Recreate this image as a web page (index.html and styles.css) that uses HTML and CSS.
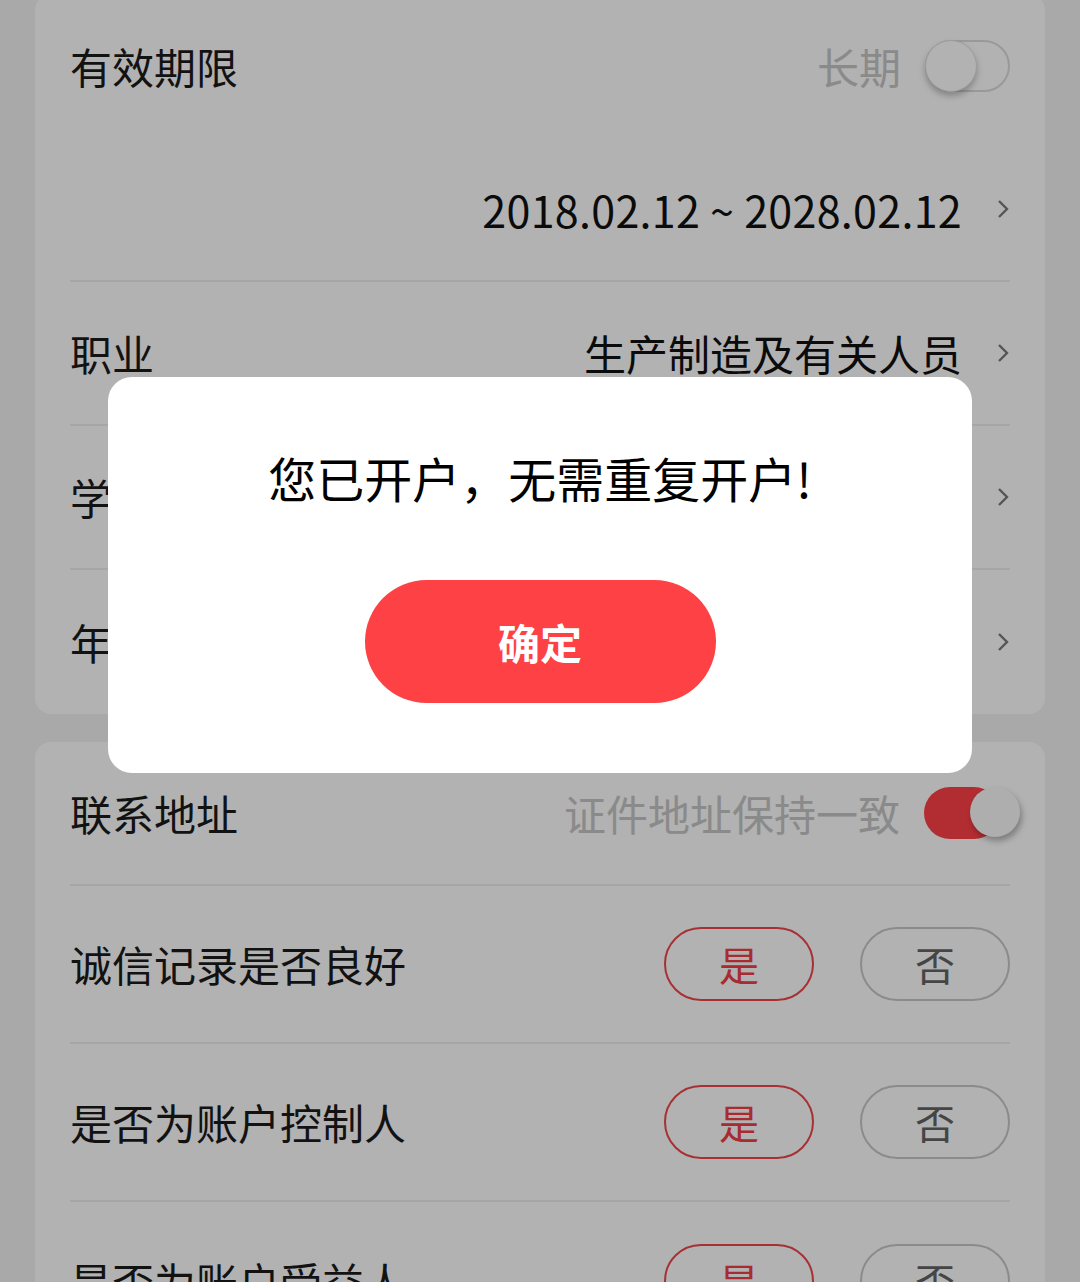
FILE: index.html
```html
<!DOCTYPE html>
<html lang="zh-CN">
<head>
    <meta charset="UTF-8">
    <meta name="viewport" content="width=device-width, initial-scale=1.0">
    <title>开户信息</title>
    <link rel="stylesheet" href="styles.css">
</head>
<body>

<div class="page">
    <!-- Card: id info -->
    <div class="card">
        <div class="row">
            <span class="label">有效期限</span>
            <div class="right">
                <span class="hint">长期</span>
                <span class="switch"><span class="knob"></span></span>
            </div>
        </div>
        <div class="row line">
            <span class="label"></span>
            <div class="right">
                <span class="value date">2018.02.12 ~ 2028.02.12</span>
                <svg class="arrow" viewBox="0 0 14 24"><path d="M3 4 L11 12 L3 20" /></svg>
            </div>
        </div>
        <div class="row line">
            <span class="label">职业</span>
            <div class="right">
                <span class="value">生产制造及有关人员</span>
                <svg class="arrow" viewBox="0 0 14 24"><path d="M3 4 L11 12 L3 20" /></svg>
            </div>
        </div>
        <div class="row line">
            <span class="label">学历</span>
            <div class="right">
                <span class="value">本科</span>
                <svg class="arrow" viewBox="0 0 14 24"><path d="M3 4 L11 12 L3 20" /></svg>
            </div>
        </div>
        <div class="row">
            <span class="label">年收入</span>
            <div class="right">
                <span class="value">10-50万</span>
                <svg class="arrow" viewBox="0 0 14 24"><path d="M3 4 L11 12 L3 20" /></svg>
            </div>
        </div>
    </div>

    <!-- Card: address and questions -->
    <div class="card">
        <div class="row line">
            <span class="label">联系地址</span>
            <div class="right">
                <span class="hint">证件地址保持一致</span>
                <span class="switch on"><span class="knob"></span></span>
            </div>
        </div>
        <div class="row tall line">
            <span class="label">诚信记录是否良好</span>
            <div class="choices">
                <span class="choice yes">是</span>
                <span class="choice">否</span>
            </div>
        </div>
        <div class="row tall line">
            <span class="label">是否为账户控制人</span>
            <div class="choices">
                <span class="choice yes">是</span>
                <span class="choice">否</span>
            </div>
        </div>
        <div class="row tall">
            <span class="label">是否为账户受益人</span>
            <div class="choices">
                <span class="choice yes">是</span>
                <span class="choice">否</span>
            </div>
        </div>
    </div>
</div>

<!-- Alert dialog -->
<div class="mask">
    <div class="dialog">
        <p class="dialog-title">您已开户，无需重复开户!</p>
        <button class="dialog-btn">确定</button>
    </div>
</div>

</body>
</html>
```

FILE: styles.css
```css
body {
    margin: 0;
    background-color: #f2f2f2;
    font-family: "Noto Sans CJK SC", "Noto Sans", sans-serif;
    color: #1a1a1a;
    overflow: hidden;
}
.page {
    padding: 0 35px;
    margin-top: -6px;
}
.card {
    background-color: #fff;
    border-radius: 16px;
    padding: 0 35px;
    margin-bottom: 28px;
}
.row {
    height: 144px;
    display: flex;
    align-items: center;
    justify-content: space-between;
    box-sizing: border-box;
}
.row.tall {
    height: 158px;
}
.row.line {
    border-bottom: 2px solid #eee;
}
.label {
    font-size: 42px;
    line-height: 1;
}
.right {
    display: flex;
    align-items: center;
}
.value {
    font-size: 42px;
    line-height: 1;
    color: #111;
}
.value.date {
    font-size: 43px;
    letter-spacing: 0.3px;
}
.hint {
    font-size: 42px;
    line-height: 1;
    color: #c6c6c6;
    margin-right: 24px;
}
.arrow {
    width: 14px;
    height: 24px;
    margin-left: 34px;
    fill: none;
    stroke: #7a7a7a;
    stroke-width: 2.4;
}

/* switch */
.switch {
    position: relative;
    width: 85px;
    height: 52px;
    box-sizing: border-box;
    border: 2px solid #dcdcdc;
    border-radius: 26px;
    background-color: #fff;
}
.switch .knob {
    position: absolute;
    left: -2px;
    top: -2px;
    width: 52px;
    height: 52px;
    border-radius: 50%;
    background-color: #fff;
    box-shadow: 0 4px 6px rgba(0, 0, 0, 0.25);
    box-sizing: border-box;
    border: 1px solid #e0e0e0;
}
.switch.on {
    width: 76px;
    border: none;
    background-color: #ff4148;
    margin-right: 10px;
}
.switch.on .knob {
    left: auto;
    right: -20px;
    top: 0;
    width: 50px;
    height: 50px;
    border: none;
    background-color: #fafafa;
    box-shadow: 2px 4px 6px rgba(0, 0, 0, 0.3);
}

/* yes / no */
.choices {
    display: flex;
    gap: 46px;
}
.choice {
    width: 150px;
    height: 74px;
    box-sizing: border-box;
    border: 2px solid #c8c8c8;
    border-radius: 37px;
    display: flex;
    align-items: center;
    justify-content: center;
    font-size: 40px;
    color: #636363;
}
.choice.yes {
    border-color: #ef464b;
    color: #ef3e44;
}

/* mask + dialog */
.mask {
    position: fixed;
    top: 0;
    left: 0;
    right: 0;
    bottom: 0;
    background-color: rgba(0, 0, 0, 0.3);
    display: flex;
    justify-content: center;
    align-items: flex-start;
    padding-top: 377px;
}
.dialog {
    width: 864px;
    height: 396px;
    background-color: #fff;
    border-radius: 24px;
    display: flex;
    flex-direction: column;
    align-items: center;
}
.dialog-title {
    margin: 76px 0 0;
    font-size: 48px;
    line-height: 48px;
    color: #000;
}
.dialog-btn {
    margin-top: 79px;
    width: 351px;
    height: 123px;
    border: none;
    border-radius: 62px;
    background-color: #fd4144;
    color: #fff;
    font-family: "Noto Sans CJK SC", sans-serif;
    font-size: 42px;
    font-weight: bold;
    cursor: pointer;
}
```
